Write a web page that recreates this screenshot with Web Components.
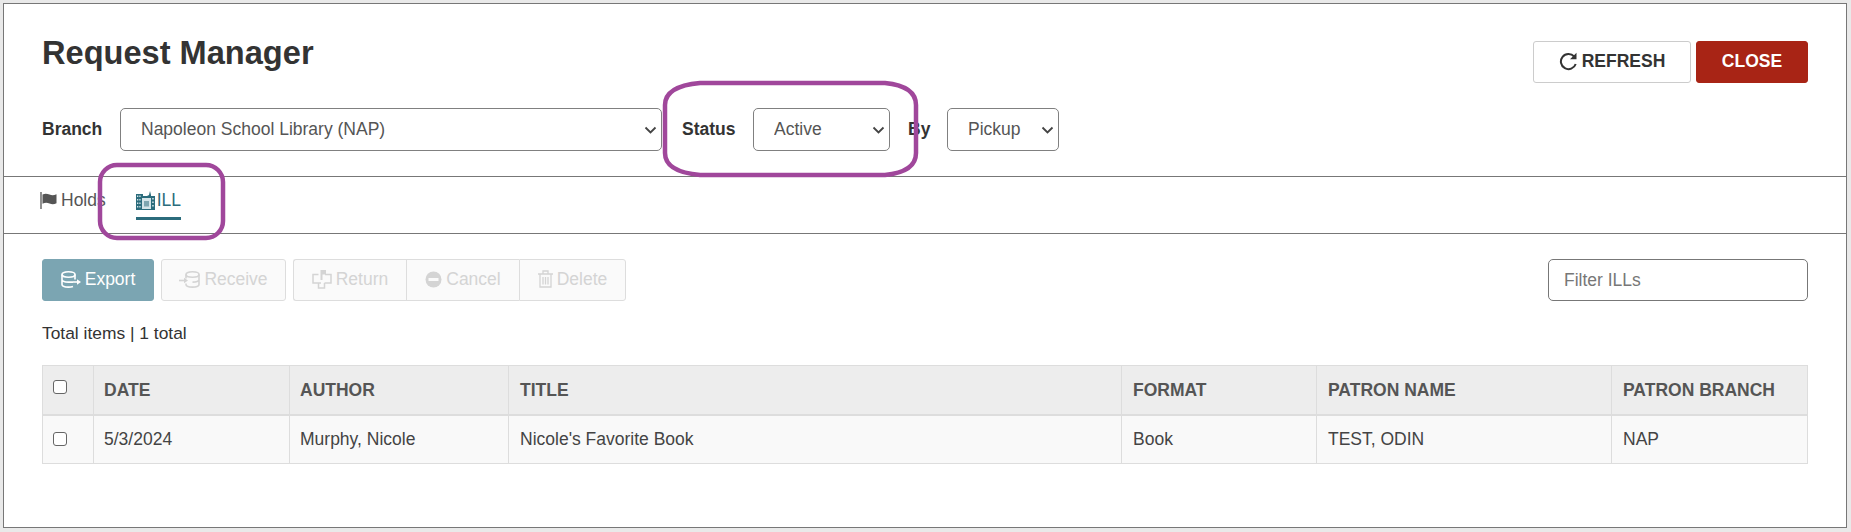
<!DOCTYPE html>
<html lang="en"><head><meta charset="utf-8"><title>Request Manager</title>
<style>
html,body{margin:0;padding:0;background:#e9e9e9;height:532px;overflow:hidden}
body{font:17.5px "Liberation Sans",Arial,sans-serif;color:#333}
</style></head><body>
<rm-app></rm-app>
<script>
const def=(n,html)=>customElements.define(n,class extends HTMLElement{connectedCallback(){if(this.shadowRoot)return;const r=this.attachShadow({mode:'open'});r.innerHTML=typeof html==='function'?html(this):html;}});
const ic={
flag:'<svg width="19" height="17" viewBox="0 0 19 17"><path d="M1 0v17" stroke="currentColor" stroke-width="1.300" fill="none"/><path d="M2.500 2.500c2.500-1.300 4.500-1 7 0s4.500.8 7-.3v9c-2.500 1.300-4.500 1.300-7 .3s-4.500-1-7 .3z" fill="currentColor"/></svg>',
bld:'<svg width="19" height="19" viewBox="0 0 19 19"><path fill="#2b6c7c" d="M0 3h7v2h4l2-1 1-4 1 4v1h4v14H0z"/><g fill="#d5e4e8"><path d="M1 4.500h1.300V6H1zM3.300 4.500h1.300V6H3.300zM1 8h1.300v1.500H1zM3.300 8h1.300v1.500H3.300zM1 11.500h1.300V13H1zM3.300 11.500h1.300V13H3.300zM1 15h1.300v1.500H1zM3.300 15h1.300v1.500H3.300zM16.200 7h1.500v1.500h-1.500zM16.200 10.500h1.500V12h-1.500zM16.200 14h1.500v1.500h-1.500z"/><path d="M6 7h9v11H6z"/></g><path fill="#7fa6b0" d="M8 10h5v5.500H8z"/></svg>',
refresh:'<svg width="19" height="19" viewBox="0 0 19 19" fill="none"><path d="M15.200 4.500A7.600 7.600 0 1 0 16.700 12" stroke="currentColor" stroke-width="2"/><path d="M17.500 0.800v6.500h-6.500z" fill="currentColor"/></svg>',
exp:'<svg width="20" height="17" viewBox="0 0 20 17" fill="none" stroke="currentColor" stroke-width="1.600"><ellipse cx="7.500" cy="3.500" rx="6.500" ry="2.700"/><path d="M1 3.500v10c0 1.500 2.900 2.600 6.500 2.600 1.800 0 3.400-.3 4.500-.7M14 3.500v5M1 8.500c0 1.500 2.900 2.600 6.500 2.600H12"/><path d="M12 11h5"/><path d="M16 8.200l4 2.800-4 2.800z" fill="currentColor" stroke="none"/></svg>',
rec:'<svg width="21" height="17" viewBox="0 0 21 17" fill="none" stroke="currentColor" stroke-width="1.600"><ellipse cx="13.500" cy="3.500" rx="6.500" ry="2.700"/><path d="M20 3.500v10c0 1.500-2.900 2.600-6.500 2.600S7 15 7 13.500v-1M7 3.500v4M20 8.500c0 1.500-2.900 2.600-6.500 2.600"/><path d="M0 9.500h6"/><path d="M5 6.800l4 2.700-4 2.700z" fill="currentColor" stroke="none"/></svg>',
ret:'<svg width="20" height="19" viewBox="0 0 20 19" fill="none" stroke="currentColor" stroke-width="1.500"><path d="M6.500 4.500H1v8.500h5.500M13 4.500h6V13h-6.500M6.500 13v5h6v-5M6.500 13H9"/><path d="M8.500 10V0H14v4.500H10.500V10z" fill="currentColor" stroke="none"/></svg>',
can:'<svg width="17" height="17" viewBox="0 0 17 17"><circle cx="8.500" cy="8.500" r="8" fill="currentColor"/><rect x="3.500" y="7" width="10" height="3" fill="#fafafa"/></svg>',
del:'<svg width="15" height="18" viewBox="0 0 15 18" fill="none" stroke="currentColor" stroke-width="1.300"><path d="M0 4h15M5 3.500V1h5v2.500M2 4v13h11V4M5 7v7.500M7.500 7v7.500M10 7v7.500"/></svg>'
};
def('rm-select',h=>`<style>
:host{display:block;position:relative;width:${h.getAttribute('w')}px;height:43px}
select{appearance:none;-webkit-appearance:none;box-sizing:border-box;display:block;width:100%;height:100%;border:1px solid #808080;border-radius:5px;background:#fff;color:#555;font:inherit;font-weight:normal;padding:0 0 2px 20px;margin:0}
svg{position:absolute;right:5px;top:18px;pointer-events:none}
</style><select aria-label="${h.getAttribute('label')}"><option>${h.getAttribute('value')}</option></select><svg width="13" height="8" viewBox="0 0 13 8" fill="none"><path d="M1.500 1.500l5 5 5-5" stroke="#444" stroke-width="1.800"/></svg>`);
def('rm-button',h=>`<style>
:host{display:inline-flex;box-sizing:border-box;height:42px;align-items:center;justify-content:center;gap:4px;border:1px solid #ddd;background:#fafafa;color:#d4d4d4;font-size:17.500px;padding-bottom:2px}
:host([kind=primary]){background:#7ba5b2;border-color:#7ba5b2;color:#fff;border-radius:3px}
:host([kind=solo]){border-radius:3px}
:host([kind=first]){border-radius:3px 0 0 3px;border-right:0}
:host([kind=mid]){border-right:0}
:host([kind=last]){border-radius:0 3px 3px 0}
:host([kind=refresh]){background:#fff;border-color:#ccc;color:#333;font-weight:bold;border-radius:3px}
:host([kind=close]){background:#a82415;border-color:#a82415;color:#fff;font-weight:bold;border-radius:3px}
svg{display:block}
</style>${ic[h.getAttribute('icon')]||''}<slot></slot>`);
def('rm-tab',h=>`<style>
:host{display:flex;align-items:center;gap:2px;height:43px;box-sizing:border-box;padding-top:7px;color:#555;border-bottom:3px solid transparent}
:host([active]){color:#2b6c7c;border-bottom-color:#2b6c7c}
svg{display:block}
</style>${ic[h.getAttribute('icon')]}<slot></slot>`);
def('rm-header',`<style>
:host{display:flex;justify-content:space-between;box-sizing:border-box;height:172px;padding:27px 38px 0 38px}
h1{font-size:32.600px;line-height:44px;font-weight:bold;margin:0 0 33px;color:#333}
.row{display:flex;align-items:center;font-weight:bold}
.btns{display:flex;gap:5px;margin-top:10px}
b{font-weight:bold}
</style><div><h1>Request Manager</h1><div class="row">
<b style="width:59px;margin-right:19px">Branch</b><rm-select w="542" label="Branch" value="Napoleon School Library (NAP)"></rm-select>
<b style="margin-left:20px;width:53px;margin-right:18px">Status</b><rm-select w="137" label="Status" value="Active"></rm-select>
<b style="margin-left:18px;width:20px;margin-right:19px">By</b><rm-select w="112" label="By" value="Pickup"></rm-select>
</div></div><div class="btns"><rm-button kind="refresh" icon="refresh" style="width:158px">REFRESH</rm-button><rm-button kind="close" style="width:112px">CLOSE</rm-button></div>`);
def('rm-tabs',`<style>
:host{display:flex;box-sizing:border-box;height:58px;padding:0 0 0 36px;border-top:1px solid #777;border-bottom:1px solid #777}
div{display:flex;gap:30px;align-items:flex-start;height:43px}
</style><div><rm-tab icon="flag">Holds</rm-tab><rm-tab icon="bld" active>ILL</rm-tab></div>`);
def('rm-toolbar',`<style>
:host{display:flex;align-items:flex-start;justify-content:space-between;padding:25px 38px 0 38px}
.l{display:flex;gap:7px}
.g{display:flex}
input{box-sizing:border-box;width:260px;height:42px;border:1px solid #777;border-radius:5px;font:inherit;padding:0 15px;margin:0;background:#fff;color:#555}
input::placeholder{color:#777;opacity:1}
</style><div class="l"><rm-button kind="primary" icon="exp" style="width:112px">Export</rm-button>
<rm-button kind="solo" icon="rec" style="width:125px">Receive</rm-button>
<div class="g"><rm-button kind="first" icon="ret" style="width:113px">Return</rm-button><rm-button kind="mid" icon="can" style="width:113px">Cancel</rm-button><rm-button kind="last" icon="del" style="width:107px">Delete</rm-button></div></div>
<input placeholder="Filter ILLs" aria-label="Filter ILLs">`);
def('rm-table',`<style>
:host{display:block;margin:0 38px}
table{border-collapse:collapse;table-layout:fixed;width:1765px;color:#333}
th,td{border:1px solid #ddd;padding:0 0 0 11px;text-align:left}
th:nth-child(-n+3),td:nth-child(-n+3){padding-left:10px}
th{background:#ededed;color:#555;height:48px;font-weight:bold;border-bottom:2px solid #ddd}
td{background:#f9f9f9;height:48px;color:#444;box-sizing:border-box}
input{appearance:none;-webkit-appearance:none;display:block;box-sizing:border-box;width:14px;height:14px;border:1px solid #666;border-radius:3px;background:#fff;margin:0}
th input{position:relative;top:-3px}
</style><table><colgroup><col style="width:51px"><col style="width:196px"><col style="width:219px"><col style="width:613px"><col style="width:195px"><col style="width:295px"><col style="width:196px"></colgroup>
<thead><tr><th><input type="checkbox" aria-label="Select all"></th><th>DATE</th><th>AUTHOR</th><th>TITLE</th><th>FORMAT</th><th>PATRON NAME</th><th>PATRON BRANCH</th></tr></thead>
<tbody><tr><td><input type="checkbox" aria-label="Select row"></td><td>5/3/2024</td><td>Murphy, Nicole</td><td>Nicole's Favorite Book</td><td>Book</td><td>TEST, ODIN</td><td>NAP</td></tr></tbody></table>`);
def('rm-marks',`<style>
:host{position:absolute;left:0;top:0;pointer-events:none}
svg{display:block}
</style><svg width="1851" height="532" fill="none" stroke="#a0479b" stroke-width="4.500"><rect x="100" y="165" width="123" height="73" rx="17"/><path d="M700 83H885C905 85 916 92 916 105V153C916 166 905 173 885 175H700C678 173 665 166 665 153V105C665 92 678 85 700 83Z"/></svg>`);
def('rm-app',`<style>
:host{display:block;position:relative;width:1851px;height:532px;box-sizing:border-box;padding:3px 4px 4px 3px}
.f{box-sizing:border-box;height:525px;background:#fff;border:1px solid #777}
p{margin:0;padding:22px 38px 22px;line-height:20px;font-size:17.400px;color:#333}
</style><div class="f"><rm-header></rm-header><rm-tabs></rm-tabs><rm-toolbar></rm-toolbar><p>Total items | 1 total</p><rm-table></rm-table></div><rm-marks></rm-marks>`);
</script></body></html>
